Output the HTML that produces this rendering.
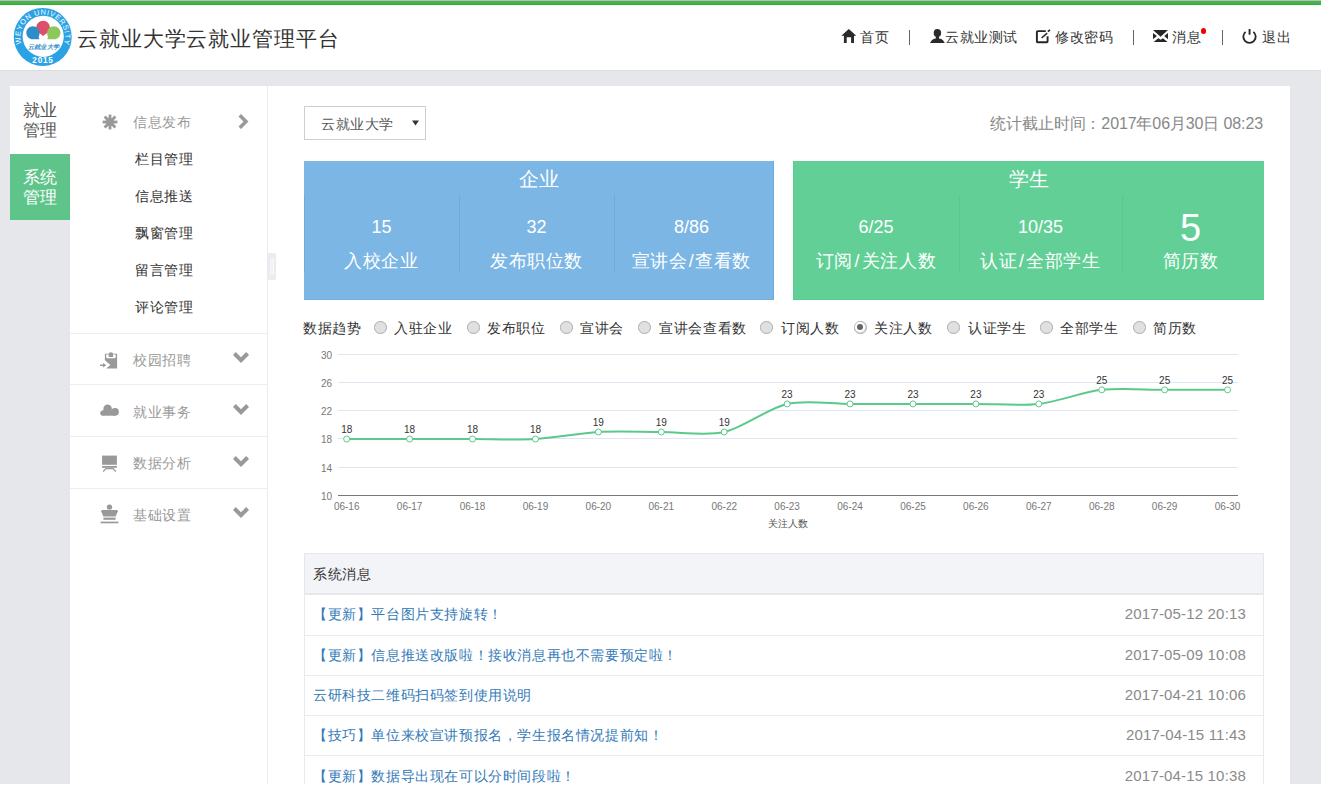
<!DOCTYPE html>
<html><head><meta charset="utf-8">
<style>
*{box-sizing:border-box}
html,body{margin:0;padding:0}
body{width:1321px;height:786px;overflow:hidden;position:relative;background:#e6e7eb;font-family:"Liberation Sans",sans-serif;font-size:14px;color:#333}
.a{position:absolute;white-space:nowrap}
#topline{left:0;top:0;width:1321px;height:1px;background:#c3b5c4}
#greenbar{left:0;top:1px;width:1321px;height:4px;background:#44b549;border-bottom:1px solid #30ad38}
#header{left:0;top:5px;width:1321px;height:65px;background:#fff}
#hshadow{left:0;top:70px;width:1321px;height:1px;background:#dcdde0}
.nav{top:29px;font-size:14px;letter-spacing:0.6px;color:#333;line-height:16px}
.sep{top:30px;width:1px;height:15px;background:#666}
#leftwhite{left:10px;top:86px;width:60px;height:68px;background:#fff}
#leftgreen{left:10px;top:154px;width:60px;height:66px;background:#5ec48a}
.lt{font-size:17px;line-height:19.5px;width:60px;text-align:center}
#side{left:70px;top:86px;width:198px;height:698px;background:#fff;border-right:1px solid #ebebef}
#main{left:268px;top:86px;width:1022px;height:698px;background:#fff}
#bottomwhite{left:0;top:784px;width:1321px;height:2px;background:#fff;z-index:5}
.mi{font-size:14px;letter-spacing:0.65px;color:#999;line-height:16px}
.sub{font-size:14px;letter-spacing:0.65px;color:#333;line-height:16px}
.hr{left:70px;width:197px;height:1px;background:#eceef2}
.stat{color:#fff;text-align:center;line-height:1}
.radio{width:12.5px;height:12.5px;border-radius:50%;background:#e0e0e0;border:1.2px solid #aeaeae}
.rl{font-size:14px;letter-spacing:0.65px;color:#333;line-height:16px;top:320px}
.ylab{font-size:10px;color:#777;width:20px;text-align:right;left:311px;line-height:10px}
.trow{left:304px;width:960px;height:40px;border-bottom:1px solid #e9eaee;border-left:1px solid #e9eaee;border-right:1px solid #e9eaee;background:#fff}
.tl{font-size:14px;letter-spacing:0.6px;color:#337ab7;line-height:16px}
.td{font-size:15px;letter-spacing:0.17px;color:#8a8a8a;line-height:18px}
</style></head>
<body>
<div class="a" id="topline"></div>
<div class="a" id="greenbar"></div>
<div class="a" id="header"></div>
<div class="a" id="hshadow"></div>

<!-- logo -->
<svg class="a" style="left:0;top:0" width="80" height="70" viewBox="0 0 80 70">
  <circle cx="42.75" cy="36.9" r="29" fill="#2ba2e4"/>
  <circle cx="43.2" cy="36.3" r="20.6" fill="#fff"/>
  <defs><path id="arc" d="M21.54,43.79 A22.3,22.3 0 1 1 63.96,43.79"/></defs>
  <text font-size="7.4" fill="#fff" font-family="Liberation Sans"><textPath href="#arc" textLength="84" lengthAdjust="spacing">WEYON  UNIVERSITY</textPath></text>
  <text x="43" y="63.3" font-size="8.2" font-weight="bold" fill="#fff" text-anchor="middle" letter-spacing="0.8" font-family="Liberation Sans">2015</text>
  <path d="M43.2,20.8 c-3.9,0 -6.9,3 -6.9,6.8 c0,3.4 2.4,5.6 4.6,6.7 l2.2,1.8 l2.2,-1.8 c2.2,-1.1 4.6,-3.3 4.6,-6.7 c0,-3.8 -3,-6.8 -6.7,-6.8z" fill="#de4f6b"/>
  <path d="M33,26.2 c-3.7,0 -6.7,2.9 -6.7,6.5 c0,3.6 3,6.6 6.7,6.6 l6.4,0 l-0.8,-2.2 c0.7,-1.2 0.9,-2.8 0.9,-4.4 c0,-3.6 -2.8,-6.5 -6.5,-6.5z" fill="#2e8dc9"/>
  <path d="M53.8,26.2 c3.7,0 6.7,2.9 6.7,6.5 c0,3.6 -3,6.6 -6.7,6.6 l-6.6,0 l0.9,-2.2 c-0.7,-1.2 -0.9,-2.8 -0.9,-4.4 c0,-3.6 2.9,-6.5 6.6,-6.5z" fill="#8ec85b"/>
  <text x="43.5" y="48.8" font-size="6.2" fill="#3a8fd0" text-anchor="middle" font-style="italic" font-weight="bold" letter-spacing="0.4">云就业大学</text>
</svg>
<div class="a" style="left:77px;top:25px;font-size:21px;letter-spacing:0.9px;line-height:28px;color:#333">云就业大学云就业管理平台</div>

<!-- nav -->
<svg class="a" style="left:841px;top:29px" width="16" height="14" viewBox="0 0 16 14"><path d="M7.8,0 L15.3,6.8 L13,6.8 L13,14 L10.1,14 L10.1,8.3 L5.7,8.3 L5.7,14 L2.9,14 L2.9,6.8 L0.3,6.8 Z" fill="#2a2a2a"/></svg>
<div class="a nav" style="left:860px">首页</div>
<div class="a sep" style="left:909px"></div>
<svg class="a" style="left:930px;top:29px" width="15" height="14" viewBox="0 0 15 14"><ellipse cx="7.4" cy="4.1" rx="3.7" ry="4.1" fill="#2a2a2a"/><path d="M5.8,7 L9,7 L9,9.6 Q11.5,10 13,11.2 L14.8,13.9 L0,13.9 L1.8,11.2 Q3.3,10 5.8,9.6Z" fill="#2a2a2a"/></svg>
<div class="a nav" style="left:945px">云就业测试</div>
<svg class="a" style="left:1035px;top:29px" width="16" height="15" viewBox="0 0 16 15"><path d="M10.8,2.1 L3,2.1 Q1.9,2.1 1.9,3.3 L1.9,12.4 Q1.9,13.3 3,13.3 L11.8,13.3 Q12.6,13.3 12.6,12.2 L12.6,7.3" fill="none" stroke="#262626" stroke-width="1.9"/><line x1="6.6" y1="9" x2="12.2" y2="4.1" stroke="#262626" stroke-width="1.5"/><line x1="12.9" y1="2.6" x2="15" y2="0.9" stroke="#262626" stroke-width="1.8"/></svg>
<div class="a nav" style="left:1055px">修改密码</div>
<div class="a sep" style="left:1133px"></div>
<svg class="a" style="left:1153px;top:30px" width="16" height="12" viewBox="0 0 16 12"><path d="M0,0 L15,0 L7.6,6.8Z M0,3 L3.9,6.1 L0,9.2Z M15,3 L11.2,6.1 L15,9.2Z M0.6,11.9 L14.6,11.9 L9.9,8.3 L7.6,9.7 L5.3,8.3Z" fill="#262626"/></svg>
<div class="a nav" style="left:1172px">消息</div>
<div class="a" style="left:1200.7px;top:28.2px;width:5.6px;height:5.6px;border-radius:50%;background:#f50000"></div>
<div class="a sep" style="left:1222px"></div>
<svg class="a" style="left:1242px;top:29px" width="15" height="15" viewBox="0 0 15 15"><path d="M3.6,2.9 A6.2,6.2 0 1 0 11.4,2.9" fill="none" stroke="#262626" stroke-width="1.8"/><rect x="6.6" y="0" width="1.9" height="5.7" fill="#262626"/></svg>
<div class="a nav" style="left:1262px">退出</div>

<!-- left column -->
<div class="a" id="leftwhite"></div>
<div class="a" id="leftgreen"></div>
<div class="a lt" style="left:10px;top:101px;color:#555">就业<br>管理</div>
<div class="a lt" style="left:10px;top:168px;color:#fff">系统<br>管理</div>

<!-- sidebar -->
<div class="a" id="side"></div>
<svg class="a" style="left:102px;top:114px" width="16" height="16" viewBox="0 0 16 16"><g stroke="#999" stroke-width="2.8"><line x1="8" y1="0.6" x2="8" y2="15.4"/><line x1="0.6" y1="8" x2="15.4" y2="8"/><line x1="2.6" y1="2.6" x2="13.4" y2="13.4"/><line x1="2.6" y1="13.4" x2="13.4" y2="2.6"/></g><circle cx="8" cy="8" r="4" fill="#999"/></svg>
<div class="a mi" style="left:133px;top:114px">信息发布</div>
<svg class="a" style="left:237px;top:114px" width="12" height="15" viewBox="0 0 12 15"><path d="M1.5,2.5 L4,0 L11.5,7.5 L4,15 L1.5,12.5 L6.5,7.5Z" fill="#999"/></svg>
<div class="a sub" style="left:135px;top:151px">栏目管理</div>
<div class="a sub" style="left:135px;top:188px">信息推送</div>
<div class="a sub" style="left:135px;top:225px">飘窗管理</div>
<div class="a sub" style="left:135px;top:262px">留言管理</div>
<div class="a sub" style="left:135px;top:299px">评论管理</div>
<div class="a hr" style="top:333px"></div>
<div class="a hr" style="top:384px"></div>
<div class="a hr" style="top:436px"></div>
<div class="a hr" style="top:488px"></div>

<svg class="a" style="left:100px;top:352px" width="18" height="17" viewBox="0 0 18 17"><path d="M4.9,1.8 L17.1,1.8 L17.1,16.5 L6.1,16.5 L10.4,13.1 L4.9,8.2Z" fill="#999"/><path d="M6.2,2.6 L15.7,2.6 L15.7,5 Q15.7,6.3 14.4,6.3 L7.5,6.3 Q6.2,6.3 6.2,5Z" fill="#fff"/><path d="M8.7,5 L8.7,2 Q8.7,0.2 10.9,0.2 Q13.1,0.2 13.1,2 L13.1,5Z" fill="#999"/><rect x="0" y="12.5" width="4" height="1.5" fill="#999"/><path d="M3,10.9 L6.3,13.25 L3,15.6Z" fill="#999"/></svg>
<div class="a mi" style="left:133px;top:352px">校园招聘</div>
<svg class="a" style="left:233px;top:352px" width="16" height="12" viewBox="0 0 16 12"><path d="M0,3 L2.8,0 L8,5.2 L13.2,0 L16,3 L8,11Z" fill="#999"/></svg>

<svg class="a" style="left:100px;top:404px" width="19" height="12" viewBox="0 0 19 12"><g fill="#999"><circle cx="7.6" cy="4.9" r="4.3"/><circle cx="15" cy="7.8" r="3.9"/><circle cx="2.8" cy="9.1" r="2.6"/><rect x="2.8" y="6" width="12.2" height="5.7"/></g></svg>
<div class="a mi" style="left:133px;top:404px">就业事务</div>
<svg class="a" style="left:233px;top:404px" width="16" height="12" viewBox="0 0 16 12"><path d="M0,3 L2.8,0 L8,5.2 L13.2,0 L16,3 L8,11Z" fill="#999"/></svg>

<svg class="a" style="left:102px;top:455px" width="16" height="17" viewBox="0 0 16 17"><rect x="0.1" y="0.6" width="14.8" height="9.2" fill="#999"/><rect x="0.1" y="11" width="14.8" height="1.8" fill="#999"/><path d="M1.2,16.6 L3.8,13.6 L11.2,13.6 L13.8,16.6" fill="none" stroke="#999" stroke-width="1.3"/></svg>
<div class="a mi" style="left:133px;top:455px">数据分析</div>
<svg class="a" style="left:233px;top:456px" width="16" height="12" viewBox="0 0 16 12"><path d="M0,3 L2.8,0 L8,5.2 L13.2,0 L16,3 L8,11Z" fill="#999"/></svg>

<svg class="a" style="left:100px;top:504px" width="19" height="20" viewBox="0 0 19 20"><circle cx="9.5" cy="3.1" r="2.7" fill="#999"/><path d="M1.1,7.3 Q1.1,6 2.6,6 L16.4,6 Q17.9,6 17.9,7.3 L15.6,12.4 L3.4,12.4 Z" fill="#999"/><rect x="3.4" y="13.6" width="12.2" height="2.2" fill="#999"/><rect x="0.6" y="17.6" width="17.8" height="1.7" fill="#999"/></svg>
<div class="a mi" style="left:133px;top:507px">基础设置</div>
<svg class="a" style="left:233px;top:507px" width="16" height="12" viewBox="0 0 16 12"><path d="M0,3 L2.8,0 L8,5.2 L13.2,0 L16,3 L8,11Z" fill="#999"/></svg>

<!-- main -->
<div class="a" id="main"></div>
<div class="a" id="bottomwhite"></div>
<div class="a" style="left:267px;top:253px;width:9px;height:27px;background:#ebebf0;border-radius:0 2px 2px 0"></div><div class="a" style="left:270px;top:258px;width:4px;height:17px;background:#f3f3f6;border-right:1px solid #fafafc"></div>


<div class="a" style="left:304px;top:106px;width:122px;height:34px;border:1px solid #cfcfcf;background:#fff"></div>
<div class="a" style="left:321px;top:116px;font-size:14px;letter-spacing:0.6px;line-height:16px;color:#555">云就业大学</div>
<svg class="a" style="left:412px;top:120px" width="7" height="6" viewBox="0 0 7 6"><path d="M0,0.5 L7,0.5 L3.5,5.5Z" fill="#333"/></svg>
<div class="a" style="right:58px;top:115px;font-size:16px;letter-spacing:-0.12px;line-height:18px;color:#888">统计截止时间：2017年06月30日 08:23</div>

<!-- blue stat box -->
<div class="a" style="left:304px;top:161px;width:470px;height:139px;background:#7cb6e4;border-right:1.5px solid #6eaadd;border-bottom:1px solid #72b0e0"></div>
<div class="a stat" style="left:304px;top:169px;width:470px;font-size:20px">企业</div>
<div class="a" style="left:304px;top:195px;width:1px;height:77px;background:#6eaadd"></div>
<div class="a" style="left:459px;top:195px;width:1px;height:77px;background:#6eaadd"></div>
<div class="a" style="left:614px;top:195px;width:1px;height:77px;background:#6eaadd"></div>
<div class="a stat" style="left:304px;top:218px;width:155px;font-size:18px">15</div>
<div class="a stat" style="left:459px;top:218px;width:155px;font-size:18px">32</div>
<div class="a stat" style="left:614px;top:218px;width:155px;font-size:18px">8/86</div>
<div class="a stat" style="left:304px;top:252px;width:155px;font-size:18px;letter-spacing:0.6px">入校企业</div>
<div class="a stat" style="left:459px;top:252px;width:155px;font-size:18px;letter-spacing:0.6px">发布职位数</div>
<div class="a stat" style="left:614px;top:252px;width:155px;font-size:18px;letter-spacing:0.6px">宣讲会<span style="margin:0 1px">/</span>查看数</div>

<!-- green stat box -->
<div class="a" style="left:793px;top:161px;width:471px;height:139px;background:#62d096;border-left:1px solid #5bcb8f;border-bottom:1px solid #5acb8d"></div>
<div class="a stat" style="left:793px;top:169px;width:471px;font-size:20px">学生</div>
<div class="a" style="left:959px;top:195px;width:1px;height:77px;background:#58c88b"></div>
<div class="a" style="left:1122px;top:195px;width:1px;height:77px;background:#58c88b"></div>
<div class="a stat" style="left:793px;top:218px;width:166px;font-size:18px">6/25</div>
<div class="a stat" style="left:959px;top:218px;width:163px;font-size:18px">10/35</div>
<div class="a stat" style="left:1122px;top:209px;width:137px;font-size:38px">5</div>
<div class="a stat" style="left:793px;top:252px;width:166px;font-size:18px;letter-spacing:0.6px">订阅<span style="margin:0 1.5px">/</span>关注人数</div>
<div class="a stat" style="left:959px;top:252px;width:163px;font-size:18px;letter-spacing:0.6px">认证<span style="margin:0 1.5px">/</span>全部学生</div>
<div class="a stat" style="left:1122px;top:252px;width:137px;font-size:18px;letter-spacing:0.6px">简历数</div>

<!-- radios -->
<div class="a rl" style="left:303px">数据趋势</div>
<div class="a radio" style="left:374px;top:321px"></div><div class="a rl" style="left:394px">入驻企业</div>
<div class="a radio" style="left:467px;top:321px"></div><div class="a rl" style="left:487px">发布职位</div>
<div class="a radio" style="left:560px;top:321px"></div><div class="a rl" style="left:580px">宣讲会</div>
<div class="a radio" style="left:638px;top:321px"></div><div class="a rl" style="left:659px">宣讲会查看数</div>
<div class="a radio" style="left:760px;top:321px"></div><div class="a rl" style="left:781px">订阅人数</div>
<div class="a radio" style="left:854px;top:321px"><div style="position:absolute;left:0;top:0;width:10px;height:10px;border-radius:50%;background:#fff;"><div style="position:absolute;left:2.1px;top:2.1px;width:5.8px;height:5.8px;border-radius:50%;background:#666"></div></div></div><div class="a rl" style="left:874px">关注人数</div>
<div class="a radio" style="left:947px;top:321px"></div><div class="a rl" style="left:968px">认证学生</div>
<div class="a radio" style="left:1040px;top:321px"></div><div class="a rl" style="left:1060px">全部学生</div>
<div class="a radio" style="left:1133px;top:321px"></div><div class="a rl" style="left:1153px">简历数</div>

<!-- chart -->
<svg class="a" style="left:0;top:0" width="1321" height="786" viewBox="0 0 1321 786" font-family="Liberation Sans">
  <g stroke="#e0e6f1" stroke-width="1">
    <line x1="338" y1="354.5" x2="1238" y2="354.5"/>
    <line x1="338" y1="382.5" x2="1238" y2="382.5"/>
    <line x1="338" y1="410.5" x2="1238" y2="410.5"/>
    <line x1="338" y1="438.5" x2="1238" y2="438.5"/>
    <line x1="338" y1="467.5" x2="1238" y2="467.5"/>
  </g>
  <line x1="338" y1="495.5" x2="1238" y2="495.5" stroke="#777" stroke-width="1"/>
  <g font-size="10" fill="#777" text-anchor="end">
    <text x="332" y="358.5">30</text><text x="332" y="386.5">26</text><text x="332" y="414.5">22</text>
    <text x="332" y="442.5">18</text><text x="332" y="471.5">14</text><text x="332" y="499.5">10</text>
  </g>
  <g font-size="10" fill="#777" text-anchor="middle">
    <text x="346.7" y="510">06-16</text><text x="409.62" y="510">06-17</text><text x="472.54" y="510">06-18</text>
    <text x="535.46" y="510">06-19</text><text x="598.38" y="510">06-20</text><text x="661.3" y="510">06-21</text>
    <text x="724.22" y="510">06-22</text><text x="787.14" y="510">06-23</text><text x="850.06" y="510">06-24</text>
    <text x="912.98" y="510">06-25</text><text x="975.9" y="510">06-26</text><text x="1038.82" y="510">06-27</text>
    <text x="1101.74" y="510">06-28</text><text x="1164.66" y="510">06-29</text><text x="1227.58" y="510">06-30</text>
  </g>
  <text x="788" y="527" font-size="10" fill="#555" text-anchor="middle">关注人数</text>
  <path d="M346.70,439.06 C346.70,439.06 390.74,439.06 409.62,439.06 C428.50,439.06 453.66,439.06 472.54,439.06 C491.42,439.06 516.64,440.11 535.46,439.06 C554.39,438.00 579.45,433.09 598.38,432.03 C617.20,430.98 642.42,432.03 661.30,432.03 C680.18,432.03 706.20,436.06 724.22,432.03 C743.95,427.62 767.41,408.32 787.14,403.91 C805.16,399.88 831.18,403.91 850.06,403.91 C868.94,403.91 894.10,403.91 912.98,403.91 C931.86,403.91 957.02,403.91 975.90,403.91 C994.78,403.91 1020.17,405.99 1038.82,403.91 C1057.93,401.78 1082.63,391.98 1101.74,389.85 C1120.39,387.77 1145.78,389.85 1164.66,389.85 C1183.54,389.85 1227.58,389.85 1227.58,389.85" fill="none" stroke="#5cc98c" stroke-width="2"/>
  <g fill="#fff" stroke="#5cc98c" stroke-width="1">
    <circle cx="346.7" cy="439.06" r="3"/><circle cx="409.62" cy="439.06" r="3"/><circle cx="472.54" cy="439.06" r="3"/>
    <circle cx="535.46" cy="439.06" r="3"/><circle cx="598.38" cy="432.03" r="3"/><circle cx="661.3" cy="432.03" r="3"/>
    <circle cx="724.22" cy="432.03" r="3"/><circle cx="787.14" cy="403.91" r="3"/><circle cx="850.06" cy="403.91" r="3"/>
    <circle cx="912.98" cy="403.91" r="3"/><circle cx="975.9" cy="403.91" r="3"/><circle cx="1038.82" cy="403.91" r="3"/>
    <circle cx="1101.74" cy="389.85" r="3"/><circle cx="1164.66" cy="389.85" r="3"/><circle cx="1227.58" cy="389.85" r="3"/>
  </g>
  <g font-size="10" fill="#333" text-anchor="middle">
    <text x="346.7" y="433">18</text><text x="409.62" y="433">18</text><text x="472.54" y="433">18</text>
    <text x="535.46" y="433">18</text><text x="598.38" y="426">19</text><text x="661.3" y="426">19</text>
    <text x="724.22" y="426">19</text><text x="787.14" y="398">23</text><text x="850.06" y="398">23</text>
    <text x="912.98" y="398">23</text><text x="975.9" y="398">23</text><text x="1038.82" y="398">23</text>
    <text x="1101.74" y="384">25</text><text x="1164.66" y="384">25</text><text x="1227.58" y="384">25</text>
  </g>
</svg>

<!-- table -->
<div class="a" style="left:304px;top:553px;width:960px;height:42px;background:#f3f4f8;border:1px solid #e6e7eb;border-bottom:2px solid #e6e7eb"></div>
<div class="a" style="left:313px;top:566px;font-size:14px;letter-spacing:0.6px;line-height:16px;color:#333">系统消息</div>
<div class="a" style="left:304px;top:595px;width:1px;height:191px;background:#e9eaee"></div>
<div class="a" style="left:1263px;top:595px;width:1px;height:191px;background:#e9eaee"></div>
<div class="a" style="left:305px;top:634.5px;width:958px;height:1px;background:#e9eaee"></div>
<div class="a tl" style="left:313px;top:606.2px">【更新】平台图片支持旋转！</div><div class="a td" style="left:auto;right:75px;top:605.3px">2017-05-12 20:13</div>
<div class="a" style="left:305px;top:675.0px;width:958px;height:1px;background:#e9eaee"></div>
<div class="a tl" style="left:313px;top:646.8px">【更新】信息推送改版啦！接收消息再也不需要预定啦！</div><div class="a td" style="left:auto;right:75px;top:645.7px">2017-05-09 10:08</div>
<div class="a" style="left:305px;top:715.3px;width:958px;height:1px;background:#e9eaee"></div>
<div class="a tl" style="left:313px;top:687.1px">云研科技二维码扫码签到使用说明</div><div class="a td" style="left:auto;right:75px;top:686.1px">2017-04-21 10:06</div>
<div class="a" style="left:305px;top:755.4px;width:958px;height:1px;background:#e9eaee"></div>
<div class="a tl" style="left:313px;top:727.3px">【技巧】单位来校宣讲预报名，学生报名情况提前知！</div><div class="a td" style="left:auto;right:75px;top:726.3px">2017-04-15 11:43</div>
<div class="a" style="left:305px;top:795.7px;width:958px;height:1px;background:#e9eaee"></div>
<div class="a tl" style="left:313px;top:767.5px">【更新】数据导出现在可以分时间段啦！</div><div class="a td" style="left:auto;right:75px;top:766.5px">2017-04-15 10:38</div>
</body></html>
